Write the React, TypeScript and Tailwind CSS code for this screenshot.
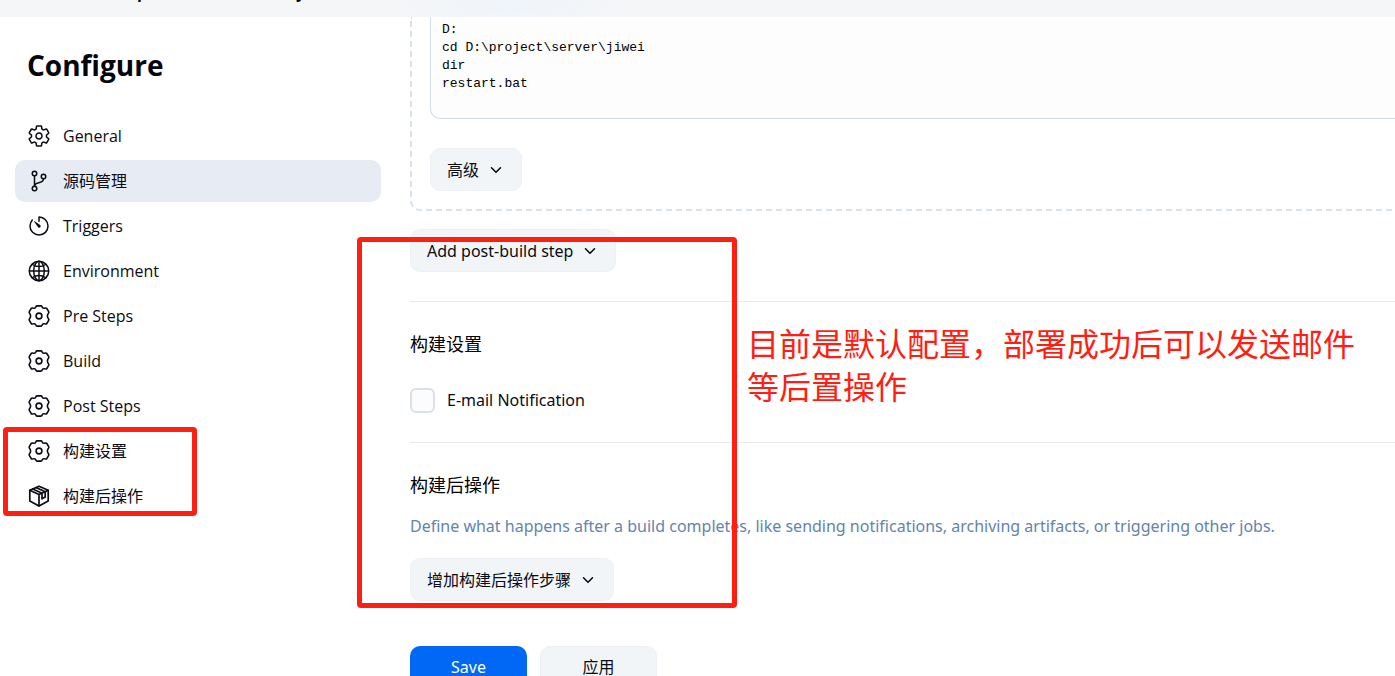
import type { ReactNode } from "react";
import { IoGitBranchOutline, IoGlobeOutline, IoSettingsOutline, IoTimerOutline } from "react-icons/io5";

function CogIcon() {
  return (
    <svg viewBox="0 0 24 24" className="size-6" fill="none" stroke="currentColor" strokeWidth="1.6" strokeLinejoin="round">
      <path d="M10 1.900h4c.6 0 .8.3 1 .9.400 1.200 1.300 1.700 2.600 1.400l1-.2c.6-.1.900 0 1.200.5l1.900 3.100c.3.500.2.900-.1 1.300-.9 1.100-1.200 1.900-1.200 3.100s.3 2 1.200 3.100c.3.400.4.800.1 1.300l-1.900 3.100c-.3.500-.6.600-1.200.5l-1-.2c-1.300-.3-2.200.2-2.600 1.400-.2.600-.4.900-1 .9h-4c-.6 0-.8-.3-1-.9-.4-1.200-1.300-1.700-2.600-1.400l-1 .2c-.6.1-.9 0-1.200-.5l-1.900-3.100c-.3-.5-.2-.9.1-1.300.9-1.100 1.200-1.900 1.200-3.100s-.3-2-1.200-3.100c-.3-.4-.4-.8-.1-1.300l1.900-3.100c.3-.5.6-.6 1.200-.5l1 .2c1.300.3 2.200-.2 2.600-1.400.2-.6.4-.9 1-.9Z" />
      <circle cx="12" cy="12" r="2.900" />
    </svg>
  );
}

function PackageIcon() {
  return (
    <svg viewBox="0 0 24 24" className="size-6" fill="none" stroke="currentColor" strokeWidth="1.7" strokeLinejoin="round" strokeLinecap="round">
      <path d="M12 2.200 21.200 6.300v10.800L12 22 2.800 17.100V6.300Z" />
      <path d="M2.800 6.300 12 10.600l9.200-4.300M12 10.600v11.200" />
      <path d="M5.900 5 15 9.300v5.500l3.200-1.700V7.800L9 3.600" />
    </svg>
  );
}

function ChevronIcon() {
  return (
    <svg viewBox="0 0 12 12" className="size-3" fill="none" stroke="currentColor" strokeWidth="1.6" strokeLinecap="round" strokeLinejoin="round">
      <path d="m1.500 3.800 4.500 4.500 4.500-4.500" />
    </svg>
  );
}

const sections = [
  { label: "General", icon: <IoSettingsOutline className="size-6" /> },
  { label: "源码管理", icon: <IoGitBranchOutline className="size-6" />, active: true },
  { label: "Triggers", icon: <IoTimerOutline className="size-6" /> },
  { label: "Environment", icon: <IoGlobeOutline className="size-6" /> },
  { label: "Pre Steps", icon: <CogIcon /> },
  { label: "Build", icon: <CogIcon /> },
  { label: "Post Steps", icon: <CogIcon /> },
  { label: "构建设置", icon: <CogIcon /> },
  { label: "构建后操作", icon: <PackageIcon /> },
];

const script = `D:
cd D:\\project\\server\\jiwei
dir
restart.bat`;

function MenuButton({ children }: { children: ReactNode }) {
  return (
    <button
      type="button"
      className="flex h-[43px] items-center gap-[11px] rounded-[10px] border border-[#edf1f5] bg-[#f2f5f8] pr-[19px] pl-4"
    >
      {children}
      <ChevronIcon />
    </button>
  );
}

export default function App() {
  return (
    <div className="relative flex h-screen flex-col overflow-hidden bg-white font-['Open_Sans','Noto_Sans_CJK_SC',sans-serif] text-base text-[#0b0b14]">
      <header className="flex h-[17px] shrink-0 items-end overflow-hidden bg-[#f5f6f8] bg-[radial-gradient(ellipse_120px_40px_at_510px_0px,#eff4fa,#f5f6f8)] pb-[13px] pl-[137px] font-bold">
        <span className="w-[159px]">p</span>
        <span>y</span>
      </header>

      <div className="flex min-h-0 flex-1">
        <aside className="w-[396px] shrink-0 px-[15px] pt-7">
          <h1 className="pl-3 text-[28px] leading-10 font-bold text-[#05050c]">Configure</h1>
          <nav className="mt-[30px] flex flex-col gap-[3px]">
            {sections.map((section) => (
              <a
                key={section.label}
                href="#"
                className={`flex h-[42px] items-center gap-3 rounded-[10px] pl-3 ${section.active ? "bg-[#e7ebf3]" : ""}`}
              >
                {section.icon}
                {section.label}
              </a>
            ))}
          </nav>
        </aside>

        <main className="flex min-w-0 flex-1 flex-col items-start pl-[14px] font-['Noto_Sans','Noto_Sans_CJK_SC',sans-serif]">
          <div className="w-full shrink-0 rounded-bl-[10px] border-b-2 border-l-2 border-dashed border-[#d9e1ea] pb-[18px] pl-[18px]">
            <textarea
              aria-label="Command"
              defaultValue={script}
              rows={4}
              className="block h-[102px] w-full resize-none rounded-bl-[10px] border-b border-l border-[#d3dbe6] bg-[#fdfdfd] pt-1 pl-[11px] font-['Liberation_Mono',monospace] text-[13px] leading-[18px] text-black"
            />
            <div className="mt-[29px] flex">
              <MenuButton>高级</MenuButton>
            </div>
          </div>

          <div className="mt-[18px]">
            <MenuButton>Add post-build step</MenuButton>
          </div>

          <section className="mt-[29px] w-full border-t border-[#e6eaf0] pt-7">
            <h2 className="text-lg leading-7 text-black">构建设置</h2>
            <label className="mt-7 mb-7 flex h-7 items-center gap-3">
              <input
                type="checkbox"
                className="size-[25px] appearance-none rounded-md border-2 border-[#d9dfeb] bg-[#fcfcfd]"
              />
              E-mail Notification
            </label>
          </section>

          <section className="w-full border-t border-[#e6eaf0] pt-7">
            <h2 className="text-lg leading-7 text-black">构建后操作</h2>
            <p className="mt-[15px] mb-5 leading-6 text-[#6384ac]">
              Define what happens after a build completes, like sending notifications, archiving artifacts, or
              triggering other jobs.
            </p>
            <div className="flex">
              <MenuButton>增加构建后操作步骤</MenuButton>
            </div>
          </section>

          <div className="mt-[45px] flex shrink-0 gap-[13px]">
            <button type="submit" className="h-[42px] w-[117px] rounded-[10px] bg-[#0068f5] text-white">
              Save
            </button>
            <button type="button" className="h-[42px] w-[117px] rounded-[10px] border border-[#edf1f5] bg-[#f2f5f8]">
              应用
            </button>
          </div>
        </main>
      </div>

      {/* Annotations drawn over the form */}
      <div className="pointer-events-none absolute top-[427px] left-[3px] h-[89px] w-[194px] rounded-[4px] border-5 border-[#ff1e12]" />
      <div className="pointer-events-none absolute top-[237px] left-[357px] h-[371px] w-[380px] rounded-[4px] border-5 border-[#ff1e12]" />
      <p className="pointer-events-none absolute top-[322px] left-[747px] text-[32px] leading-[43px] whitespace-nowrap text-[#ff1e12]">
        目前是默认配置，部署成功后可以发送邮件
        <br />
        等后置操作
      </p>
    </div>
  );
}
